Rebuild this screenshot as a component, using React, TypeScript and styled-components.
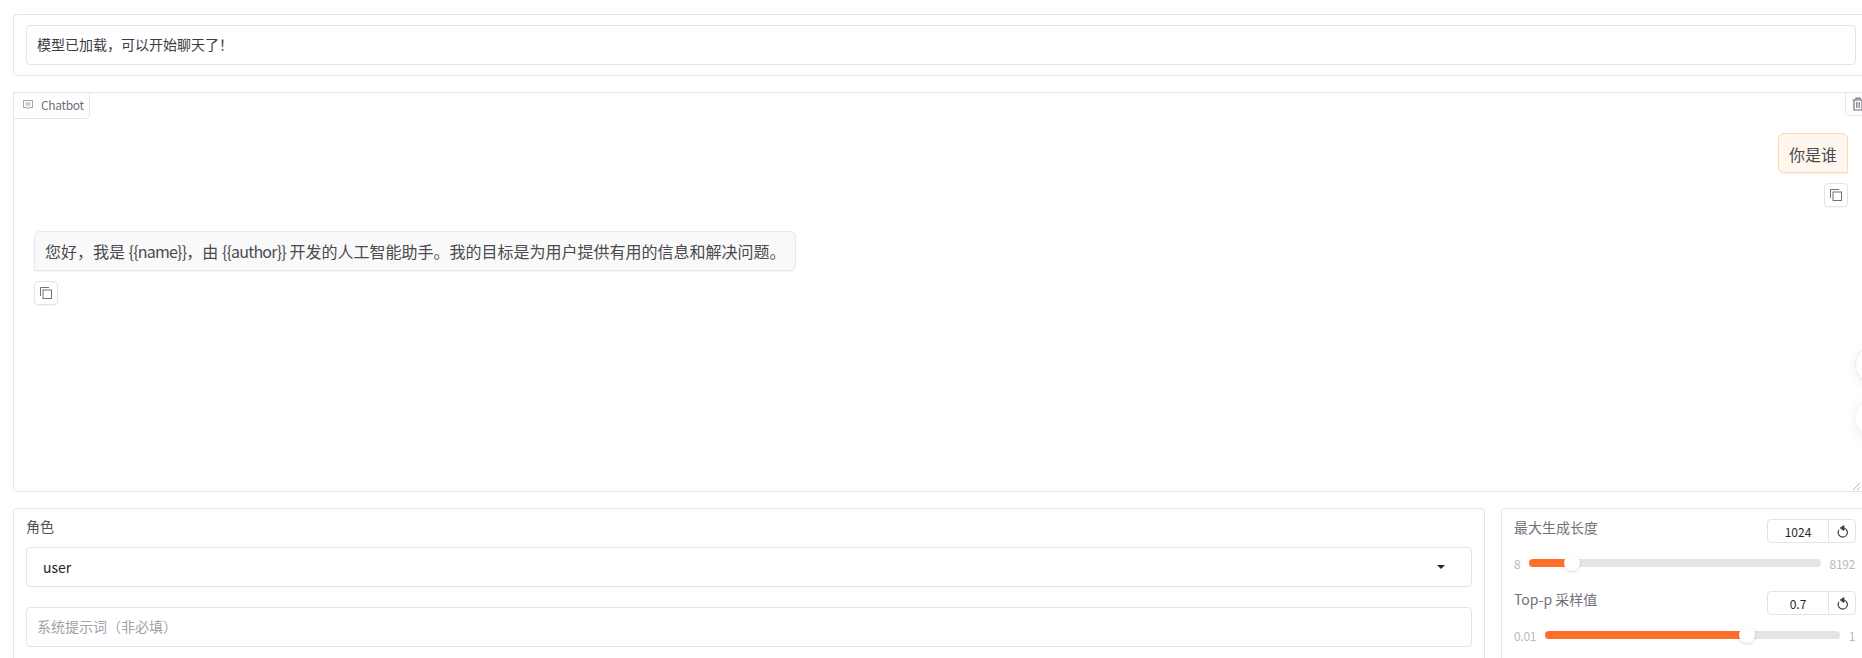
import React from "react";
import styled, { createGlobalStyle } from "styled-components";

const Global = createGlobalStyle`
  html, body { margin: 0; padding: 0; height: 658px; overflow: hidden; background: #fff; }
  body { font-family: "Noto Sans CJK SC", "Noto Sans", sans-serif; color: #3a3a3f; }
  * { box-sizing: border-box; }
`;

const Page = styled.div`
  width: 1856px;
  margin-left: 13px;
  padding-top: 14px;
  display: flex;
  flex-direction: column;
  gap: 16px;
`;

const Card = styled.div`
  border: 1px solid #e4e4e7;
  border-radius: 4px;
  background: #fff;
`;

const StatusCard = styled(Card)`
  padding: 10px 12px;
`;

const Field = styled.div`
  height: 40px;
  border: 1px solid #e4e4e7;
  border-radius: 4px;
  display: flex;
  align-items: center;
  padding: 0 10px 2px;
  font-size: 14px;
  background: #fff;
`;

const Chat = styled(Card)`
  position: relative;
  height: 400px;
  padding: 40px 20px 0 20px;
  display: flex;
  flex-direction: column;
`;

const ChatTab = styled.div`
  position: absolute;
  left: -1px;
  top: -1px;
  height: 27px;
  width: 77px;
  display: flex;
  align-items: center;
  gap: 7px;
  padding: 0 0 2px 8px;
  border: 1px solid #e4e4e7;
  border-radius: 0 0 4px 0;
  font-size: 12px;
  letter-spacing: -0.35px;
  color: #71717a;
  background: #fff;
`;

const TrashTab = styled.div`
  position: absolute;
  left: 1831px;
  top: -1px;
  width: 26px;
  height: 24px;
  display: flex;
  align-items: center;
  justify-content: center;
  border: 1px solid #e4e4e7;
  border-radius: 0 0 0 4px;
  color: #71717a;
  background: #fff;
`;

const Message = styled.div<{ $user?: boolean }>`
  display: flex;
  flex-direction: column;
  align-items: ${(p) => (p.$user ? "flex-end" : "flex-start")};
  gap: 10px;
  margin-bottom: 24px;
`;

const Bubble = styled.div<{ $user?: boolean }>`
  height: 40px;
  display: flex;
  align-items: center;
  padding: ${(p) => (p.$user ? "1px 10px 0" : "0 10px")};
  font-size: 16px;
  color: #4a4a50;
  white-space: pre;
  border: 1px solid ${(p) => (p.$user ? "#fed7aa" : "#e8e8ea")};
  background: ${(p) => (p.$user ? "#fff7ed" : "#f9f9f9")};
  border-radius: ${(p) => (p.$user ? "6px 6px 0 6px" : "6px 6px 6px 0")};
  box-shadow: 0 1px 2px rgba(0, 0, 0, 0.05);
`;

const Latin = styled.span`
  letter-spacing: -0.8px;
`;

const CopyButton = styled.div`
  width: 24px;
  height: 24px;
  display: flex;
  align-items: center;
  justify-content: center;
  border: 1px solid #e4e4e7;
  border-radius: 4px;
  color: #71717a;
  background: #fff;
  box-shadow: 0 1px 2px rgba(0, 0, 0, 0.05);
`;

const FloatCircle = styled.div<{ $top: number; $tint?: boolean }>`
  position: absolute;
  left: 1841px;
  top: ${(p) => p.$top}px;
  width: 38px;
  height: 38px;
  border-radius: 50%;
  background: #fff;
  border: 1px solid ${(p) => (p.$tint ? "#e6e8fb" : "#f5f5f6")};
  box-shadow: 0 2px 14px rgba(0, 0, 0, 0.07);
`;

const ResizeHandle = styled.svg`
  position: absolute;
  left: 1838px;
  top: 389px;
  width: 9px;
  height: 9px;
`;

const Bottom = styled.div`
  display: flex;
  gap: 16px;
`;

const LeftPanel = styled(Card)`
  width: 1472px;
  height: 170px;
  padding: 5px 12px;
  border-bottom: none;
`;

const PanelLabel = styled.div`
  font-size: 14px;
  line-height: 24px;
  color: #52525b;
  margin-bottom: 9px;
`;

const SelectField = styled(Field)`
  justify-content: space-between;
  padding: 0 26px 0 16px;
  margin-bottom: 20px;
  color: #27272a;
`;

const Caret = styled.span`
  width: 0;
  height: 0;
  border-left: 4px solid transparent;
  border-right: 4px solid transparent;
  border-top: 4px solid #27272a;
`;

const Placeholder = styled(Field)`
  color: #a1a1aa;
`;

const RightPanel = styled(Card)`
  flex: 1;
  height: 170px;
  padding: 10px 12px 0 12px;
  border-bottom: none;
`;

const SliderBlock = styled.div`
  margin-bottom: 20px;
`;

const SliderHead = styled.div`
  display: flex;
  justify-content: space-between;
  align-items: flex-start;
  height: 24px;
  margin-bottom: 12px;
`;

const SliderLabel = styled.div`
  font-size: 14px;
  line-height: 16px;
  color: #71717a;
`;

const NumberBox = styled.div`
  width: 89px;
  height: 24px;
  display: flex;
  border: 1px solid #e4e4e7;
  border-radius: 4px;
  font-size: 12px;
`;

const NumberValue = styled.div`
  flex: 1;
  display: flex;
  align-items: center;
  justify-content: center;
  color: #27272a;
`;

const ResetButton = styled.div`
  width: 27px;
  display: flex;
  align-items: center;
  justify-content: center;
  border-left: 1px solid #e4e4e7;
  color: #3f3f46;
`;

const SliderRow = styled.div`
  display: flex;
  align-items: center;
  height: 16px;
  gap: 9px;
  padding-right: 1px;
  font-size: 12px;
  letter-spacing: -0.3px;
  color: #b8b8bf;
`;

const Track = styled.div`
  position: relative;
  flex: 1;
  height: 8px;
  border-radius: 4px;
  background: #e4e4e7;
`;

const Fill = styled.div`
  height: 8px;
  border-radius: 4px;
  background: #ff6f2c;
`;

const Thumb = styled.div`
  position: absolute;
  top: -4px;
  width: 16px;
  height: 16px;
  margin-left: -8px;
  border-radius: 50%;
  background: #fff;
  box-shadow: 0 1px 3px rgba(0, 0, 0, 0.15);
`;

const ChatIcon = () => (
  <svg width="12" height="12" viewBox="0 0 12 12" fill="none" stroke="#a1a1aa" strokeWidth="1">
    <path d="M1.5 1.5h9v7H7l-1 1.5-1-1.5H1.5z" />
    <path d="M3.5 4h5M3.5 6h5" />
  </svg>
);

const TrashIcon = () => (
  <svg width="14" height="14" viewBox="0 0 14 14" fill="none" stroke="currentColor" strokeWidth="1.2">
    <path d="M1.5 3h11M5 3V1.2h4V3M3 3v10h8V3M5.8 5v6M8.2 5v6" />
  </svg>
);

const CopyIcon = () => (
  <svg width="14" height="14" viewBox="0 0 14 14" fill="none" stroke="currentColor" strokeWidth="1">
    <path d="M1.5 10V1.5H10" />
    <rect x="4" y="4" width="8.5" height="8.5" />
  </svg>
);

const ResetIcon = () => (
  <svg width="13" height="13" viewBox="0 0 24 24" fill="none" stroke="currentColor" strokeWidth="2.2">
    <path d="M5.5 9A8.5 8.5 0 1 0 14.5 5.6" />
    <path d="M14.5 1.5L8.5 5.5l6 4z" fill="currentColor" strokeLinejoin="round" />
  </svg>
);

type SliderProps = { label: string; value: string; min: string; max: string; percent: number };

const Slider = ({ label, value, min, max, percent }: SliderProps) => (
  <SliderBlock>
    <SliderHead>
      <SliderLabel>{label}</SliderLabel>
      <NumberBox>
        <NumberValue>{value}</NumberValue>
        <ResetButton>
          <ResetIcon />
        </ResetButton>
      </NumberBox>
    </SliderHead>
    <SliderRow>
      <span>{min}</span>
      <Track>
        <Fill style={{ width: `${percent}%` }} />
        <Thumb style={{ left: `${percent}%` }} />
      </Track>
      <span>{max}</span>
    </SliderRow>
  </SliderBlock>
);

export default function App() {
  return (
    <Page>
      <Global />
      <StatusCard>
        <Field>模型已加载，可以开始聊天了！</Field>
      </StatusCard>
      <Chat>
        <ChatTab>
          <ChatIcon />
          Chatbot
        </ChatTab>
        <TrashTab>
          <TrashIcon />
        </TrashTab>
        <Message $user>
          <Bubble $user>你是谁</Bubble>
          <CopyButton>
            <CopyIcon />
          </CopyButton>
        </Message>
        <Message>
          <Bubble>
            您好，我是 <Latin>{"{{name}}"}</Latin>，由 <Latin>{"{{author}}"}</Latin> 开发的人工智能助手。我的目标是为用户提供有用的信息和解决问题。
          </Bubble>
          <CopyButton>
            <CopyIcon />
          </CopyButton>
        </Message>
        <FloatCircle $top={253} $tint />
        <FloatCircle $top={306} />
        <ResizeHandle viewBox="0 0 9 9" fill="none" stroke="#b4b4b8" strokeWidth="1">
          <path d="M1 8L8 1M5 8l3-3" />
        </ResizeHandle>
      </Chat>
      <Bottom>
        <LeftPanel>
          <PanelLabel>角色</PanelLabel>
          <SelectField>
            user
            <Caret />
          </SelectField>
          <Placeholder>系统提示词（非必填）</Placeholder>
        </LeftPanel>
        <RightPanel>
          <Slider label="最大生成长度" value="1024" min="8" max="8192" percent={14.5} />
          <Slider label="Top-p 采样值" value="0.7" min="0.01" max="1" percent={68.6} />
        </RightPanel>
      </Bottom>
    </Page>
  );
}
